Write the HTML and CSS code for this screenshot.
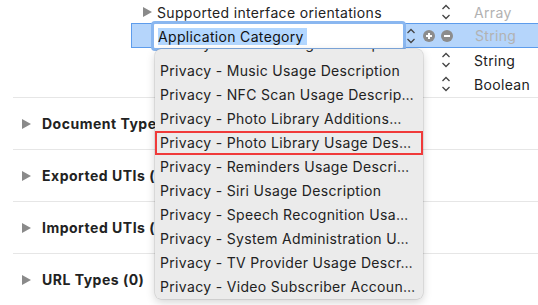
FILE: index.html
```html
<!DOCTYPE html>
<html lang="en">
<head>
  <meta charset="UTF-8">
  <title>Info.plist</title>
  <link rel="stylesheet" href="styles.css">
</head>
<body>
  <div class="plist">
    <div class="row">
      <div class="key"><span class="disclosure"></span>Supported interface orientations</div>
      <div class="ctrl"><svg class="stepper" viewBox="0 0 10 18"><polyline points="1.5,6 5,2.5 8.5,6"/><polyline points="1.5,12 5,15.5 8.5,12"/></svg></div>
      <div class="type muted">Array</div>
    </div>
    <div class="row selected">
      <div class="key"><div class="field"><span class="sel">Application Category</span></div></div>
      <div class="ctrl tight">
        <svg class="stepper small" viewBox="0 0 10 18"><polyline points="1.5,6 5,2.5 8.5,6"/><polyline points="1.5,12 5,15.5 8.5,12"/></svg>
        <svg class="round" viewBox="0 0 12 12"><circle cx="6" cy="6" r="6"/><path d="M6 3v6M3 6h6"/></svg>
        <svg class="round" viewBox="0 0 12 12"><circle cx="6" cy="6" r="6"/><path d="M3 6h6"/></svg>
      </div>
      <div class="type muted">String</div>
    </div>
    <div class="row">
      <div class="key"></div>
      <div class="ctrl"><svg class="stepper" viewBox="0 0 10 18"><polyline points="1.5,6 5,2.5 8.5,6"/><polyline points="1.5,12 5,15.5 8.5,12"/></svg></div>
      <div class="type">String</div>
    </div>
    <div class="row">
      <div class="key"></div>
      <div class="ctrl"><svg class="stepper" viewBox="0 0 10 18"><polyline points="1.5,6 5,2.5 8.5,6"/><polyline points="1.5,12 5,15.5 8.5,12"/></svg></div>
      <div class="type">Boolean</div>
    </div>
  </div>

  <div class="sections">
    <div class="section"><span class="disclosure"></span>Document Types (0)</div>
    <div class="section"><span class="disclosure"></span>Exported UTIs (0)</div>
    <div class="section"><span class="disclosure"></span>Imported UTIs (0)</div>
    <div class="section"><span class="disclosure"></span>URL Types (0)</div>
  </div>

  <div class="menu">
    <div class="menu-list">
      <div class="item peek">Privacy - Motion Usage Description</div>
      <div class="item">Privacy - Music Usage Description</div>
      <div class="item">Privacy - NFC Scan Usage Descrip…</div>
      <div class="item">Privacy - Photo Library Additions…</div>
      <div class="item marked">Privacy - Photo Library Usage Des…</div>
      <div class="item">Privacy - Reminders Usage Descri…</div>
      <div class="item">Privacy - Siri Usage Description</div>
      <div class="item">Privacy - Speech Recognition Usa…</div>
      <div class="item">Privacy - System Administration U…</div>
      <div class="item">Privacy - TV Provider Usage Descr…</div>
      <div class="item">Privacy - Video Subscriber Accoun…</div>
    </div>
  </div>
</body>
</html>
```

FILE: styles.css
```css
body {
  margin: 0;
  width: 538px;
  height: 305px;
  overflow: hidden;
  background: #fff;
  color: #222;
  font-family: Inter, "Liberation Sans", sans-serif;
  font-size: 14px;
  letter-spacing: 0.33px;
  position: relative;
}
.plist {
  margin-left: 131px;
  height: 97px;
}
.row {
  display: grid;
  grid-template-columns: 274px 69px 1fr;
  height: 24px;
  align-items: center;
  box-sizing: border-box;
}
.row.selected {
  background: #b5d5fb;
  border: 1px solid #5d9cec;
  border-right: none;
  margin-top: -1px;
  height: 25px;
}
.key {
  display: flex;
  align-items: center;
  padding-left: 12px;
  white-space: nowrap;
  height: 100%;
}
.disclosure {
  width: 0;
  height: 0;
  border-left: 9px solid #8a8a8a;
  border-top: 5.5px solid transparent;
  border-bottom: 5.5px solid transparent;
  margin-right: 5px;
}
.field {
  margin-left: 7px;
  margin-top: -3px;
  margin-bottom: -4px;
  flex: 1;
  align-self: stretch;
  background: #fff;
  border: 3px solid #8ab7f0;
  border-radius: 4px;
  display: flex;
  align-items: center;
  padding-left: 4px;
}
.sel {
  background: #b3d7ff;
  color: #111;
  padding-right: 3px;
}
.ctrl {
  display: flex;
  align-items: center;
  padding-left: 36px;
  gap: 7px;
}
.ctrl.tight {
  padding-left: 0;
  gap: 6px;
}
.stepper {
  width: 10px;
  height: 18px;
  fill: none;
  stroke: #444;
  stroke-width: 1.3;
}
.stepper.small {
  margin-right: 1px;
}
.round {
  width: 12px;
  height: 12px;
}
.round circle {
  fill: #8c8c8c;
}
.round path {
  stroke: #fff;
  stroke-width: 2;
}
.type {
  white-space: nowrap;
}
.muted {
  color: #b2b2b2;
}
.sections {
  margin-left: 13px;
  border-top: 1px solid #e6e6e6;
}
.section {
  height: 51px;
  border-bottom: 1px solid #e6e6e6;
  display: flex;
  align-items: center;
  padding-left: 9px;
  font-weight: bold;
  letter-spacing: 0.5px;
  white-space: nowrap;
}
.section .disclosure {
  margin-right: 11px;
}
.menu {
  position: absolute;
  left: 155px;
  top: 49px;
  width: 268px;
  height: 250px;
  background: #ebebeb;
  border-radius: 6px;
  box-shadow: 0 3px 10px rgba(0, 0, 0, 0.18), 0 0 0 0.5px rgba(0, 0, 0, 0.15);
  overflow: hidden;
}
.menu-list {
  margin-top: -17px;
}
.item {
  height: 24px;
  line-height: 24px;
  padding-left: 5px;
  white-space: nowrap;
  box-sizing: border-box;
}
.item.peek {
  height: 27px;
}
.item.marked {
  box-shadow: inset 0 0 0 2px #f03a3a;
}
```
